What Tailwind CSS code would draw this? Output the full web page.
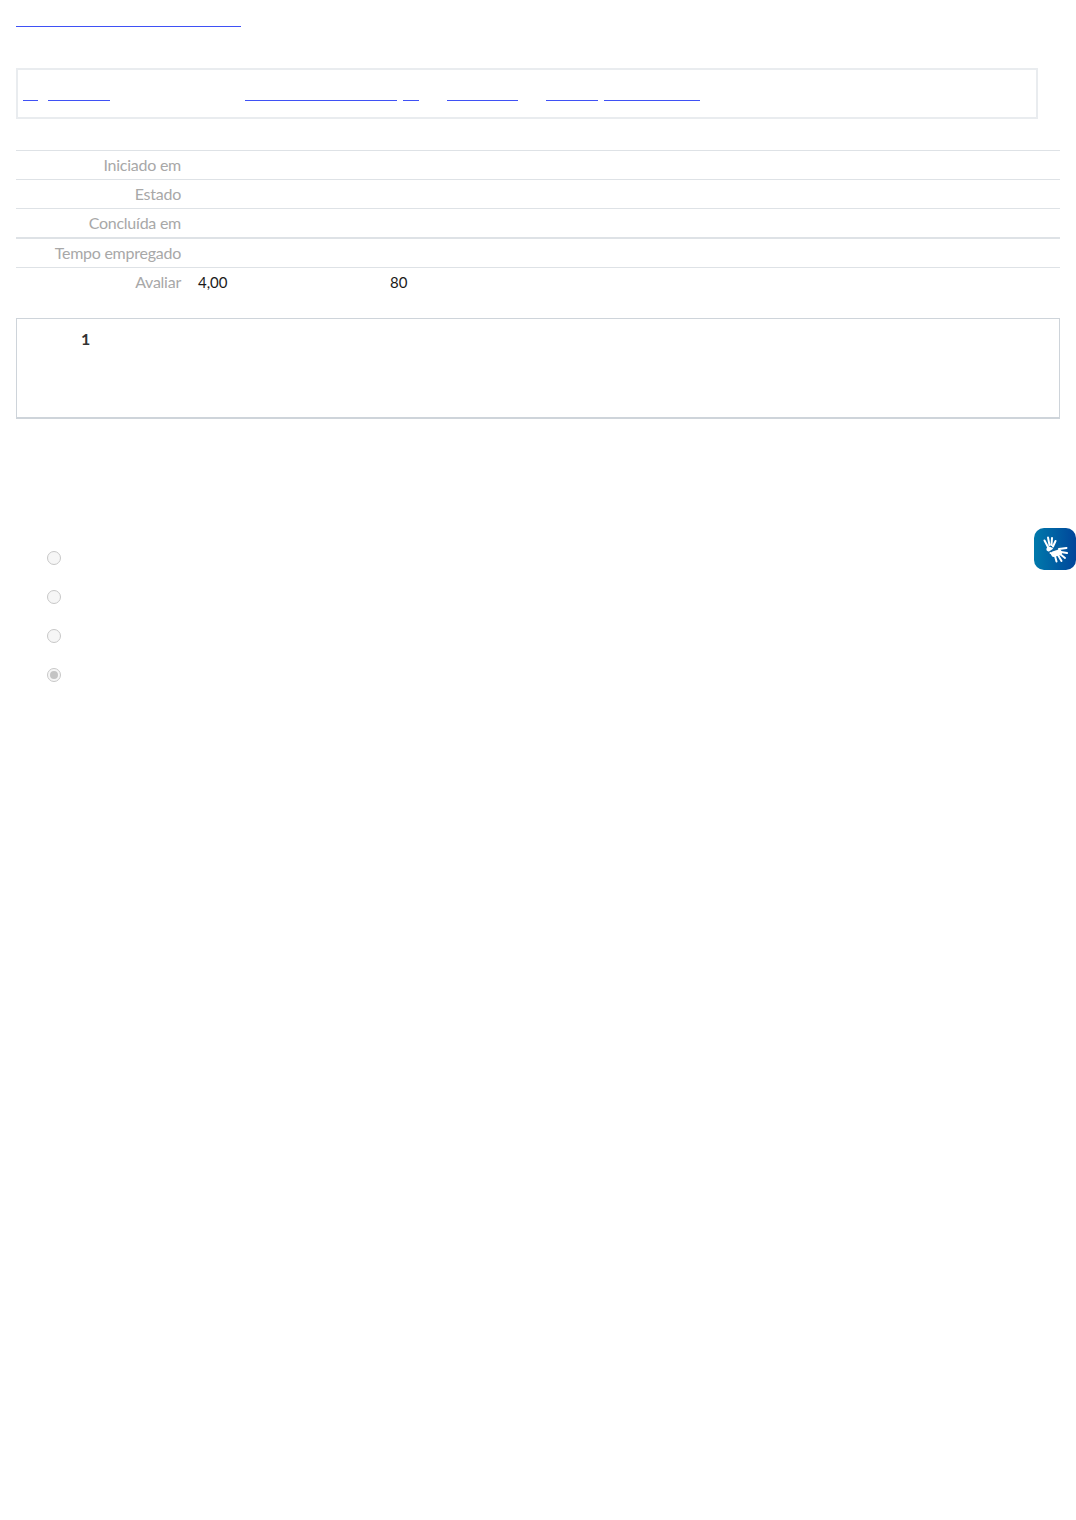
<!DOCTYPE html>
<html lang="pt-BR">
<head>
  <meta charset="UTF-8" />
  <title>Revisão da tentativa</title>
  <script src="https://cdn.jsdelivr.net/npm/@tailwindcss/browser@4"></script>
</head>
<body class="bg-white font-['Lato','Open_Sans',sans-serif] h-[1520px] relative overflow-hidden">

  <div class="px-4">
    <!-- skip link -->
    <div class="h-[68px] pt-[26px]">
      <a href="#" class="block w-[225px] h-px bg-[#3f51f5]"></a>
    </div>

    <!-- navigation box -->
    <div class="w-[1022px] h-[51px] border-2 border-[#e9ecef] pl-[5px] pt-[30px] flex gap-[10px]">
      <a href="#" class="w-[15px] h-px bg-[#3f51f5]"></a>
      <a href="#" class="w-[62px] h-px bg-[#3f51f5]"></a>
      <a href="#" class="w-[152px] h-px bg-[#3f51f5] ml-[125px]"></a>
      <a href="#" class="w-[16px] h-px bg-[#3f51f5] -ml-[4px]"></a>
      <a href="#" class="w-[71px] h-px bg-[#3f51f5] ml-[18px]"></a>
      <a href="#" class="w-[52px] h-px bg-[#3f51f5] ml-[18px]"></a>
      <a href="#" class="w-[96px] h-px bg-[#3f51f5] -ml-[4px]"></a>
    </div>

    <!-- attempt summary -->
    <div class="mt-[31px] text-[16px] tracking-[-0.25px] text-[#a8a8a8]">
      <div class="h-[29px] border-t border-[#dee2e6] flex items-center">
        <div class="w-[165px] text-right">Iniciado em</div>
      </div>
      <div class="h-[29px] border-t border-[#dee2e6] flex items-center">
        <div class="w-[165px] text-right">Estado</div>
      </div>
      <div class="h-[29px] border-t border-[#dee2e6] flex items-center">
        <div class="w-[165px] text-right">Concluída em</div>
      </div>
      <div class="h-[30px] border-t-2 border-[#dee2e6] flex items-center">
        <div class="w-[165px] text-right">Tempo empregado</div>
      </div>
      <div class="h-[29px] border-t border-[#dee2e6] flex items-center">
        <div class="w-[165px] text-right">Avaliar</div>
        <div class="w-[192px] ml-[17px] text-[15px] tracking-normal text-[#1a1a1a]">4,00</div>
        <div class="text-[15px] tracking-normal text-[#1a1a1a]">80</div>
      </div>
    </div>

    <!-- question box -->
    <div class="mt-[22px] h-[101px] border border-b-2 border-[#ced4da] pl-[64px] pt-[10px] text-[16px] font-bold leading-5 text-[#333333]">1</div>

    <!-- answers -->
    <div class="mt-[132px] pl-[31px] flex flex-col gap-[25px]">
      <span class="w-[14px] h-[14px] rounded-full border border-[#c8c8c8] bg-[#f6f6f6]"></span>
      <span class="w-[14px] h-[14px] rounded-full border border-[#c8c8c8] bg-[#f6f6f6]"></span>
      <span class="w-[14px] h-[14px] rounded-full border border-[#c8c8c8] bg-[#f6f6f6]"></span>
      <span class="w-[14px] h-[14px] rounded-full border border-[#c8c8c8] bg-[#f6f6f6] flex items-center justify-center">
        <span class="w-[8px] h-[8px] rounded-full bg-[#c4c4c4]"></span>
      </span>
    </div>
  </div>

  <!-- VLibras widget -->
  <div class="absolute left-[1034px] top-[528px] w-[42px] h-[42px] rounded-[10px] bg-gradient-to-r from-[#0079ab] to-[#00459a]">
    <svg width="42" height="42" viewBox="0 0 42 42" fill="none" stroke-linecap="round" stroke-linejoin="round">
      <!-- hand at the back -->
      <g stroke="#ffffff">
        <path stroke-width="2" d="M14 19 L10.5 12.5 M15.5 17 L14 9.5 M17.5 17 L18 10 M19 18.5 L21.5 13" />
        <path stroke-width="5" d="M15 21 L17 22" />
        <path stroke-width="2" d="M18 23 L23 21" />
      </g>
      <!-- hand in front, with a gap in the background colour -->
      <path stroke="#0a62a0" stroke-width="3" d="M15.5 25 L20 22 L26 19" />
      <g stroke="#ffffff">
        <path stroke-width="6" d="M20 26 L25 24.5" />
        <path stroke-width="2" d="M16.5 25 L20 27 M25 21 L32.5 20 M27 24 L33 25 M26 26 L31 30 M24 27 L27.5 33 M21 28 L22.5 33.5" />
      </g>
    </svg>
  </div>

</body>
</html>
